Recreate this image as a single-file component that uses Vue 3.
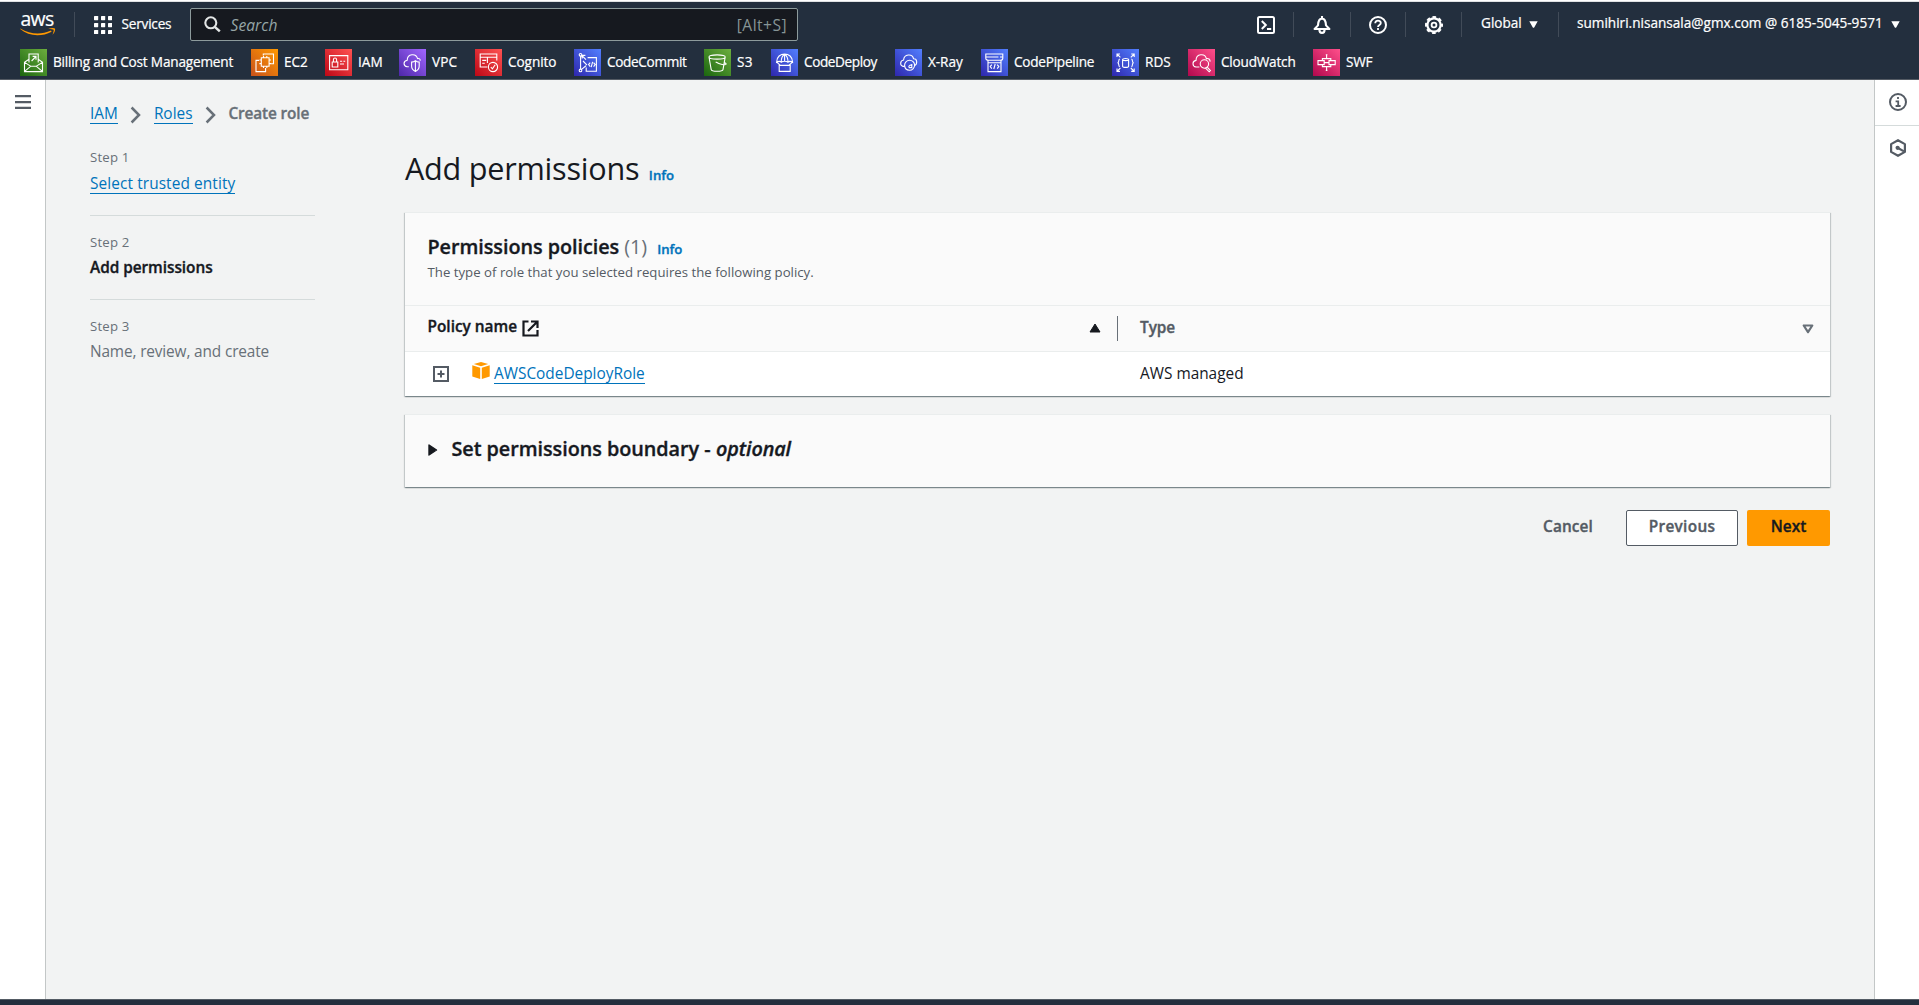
<script setup>
// span: distance to the next favourite; tracking: letter spacing of the label
const favourites = [
  { label: 'Billing and Cost Management', tone: 'green', span: 231, tracking: -0.19, icon: 'M9 13.5V5h9.2v8.5M11.6 12l4.2-4.4M12.6 7.4h3.4v3.4M9 10.2l-4.5 3V22.6h18v-9.4l-4.3-3M4.6 13.4l6.4 4M22.4 13.4l-6.4 4M4.6 22.4l6.2-5.2h5.4l6.2 5.2' },
  { label: 'EC2', tone: 'orange', span: 74, tracking: 0, icon: 'M10.3 8.8h7.8v8.4h-7.8zM12.5 8.6V7M15.8 8.6V7M12.5 19v-1.8M15.8 19v-1.8M18.2 11h1.8M18.2 14.6h1.8M8.4 11h1.8M8.4 14.6h1.8M12.3 6.4V5h10.2v9.8h-3M8 11.4H5v11.2h9.6V19' },
  { label: 'IAM', tone: 'red', span: 74, tracking: 0, icon: 'M4.6 6.6h18.2v14.2H4.6zM7.2 13h5.6v5H7.2zM8.4 13v-2.2a1.6 1.8 0 0 1 3.2 0V13M15 12.2h2.2M18.4 12.2h1.8M15 15h4' },
  { label: 'VPC', tone: 'purple', span: 76, tracking: 0.1, icon: 'M9.8 17.8H8.2c-4.2-.6-4.2-6 0-6.6.2-6.6 8.8-7.4 10.4-1.6 1.6-.6 2.8.6 2.6 2.2M16.4 11.8c-1 .8-2.4 1.3-3.8 1.3v4c0 2.6 1.6 4.4 3.8 5.4 2.2-1 3.8-2.8 3.8-5.4v-4c-1.4 0-2.8-.5-3.8-1.3zM16.4 12v10.4' },
  { label: 'Cognito', tone: 'red', span: 99, tracking: -0.08, icon: 'M12.4 18H5.2V5h16.6v6.6M5.2 8.2h16.6M7.2 11.4h4M7.2 14.2h2.6M12.4 14V8.4M18 22.6a4.6 4.6 0 1 0 0-9.2 4.6 4.6 0 0 0 0 9.2zM15.8 18l1.6 1.8 2.8-4' },
  { label: 'CodeCommit', tone: 'blue', span: 130, tracking: -0.33, icon: 'M6.6 6.8v13.4M7.8 6.4l4.2 4.2M8.2 9.6V6.4h3.2M7.6 20.4l4.4-3.6M9 12l4 4.2M13.6 8.6h8.8v13.6H12.2v-3.6M5.2 5.8a1.3 1.3 0 1 0 2.6 0 1.3 1.3 0 0 0-2.6 0zM5.2 21.4a1.3 1.3 0 1 0 2.6 0 1.3 1.3 0 0 0-2.6 0zM16.2 13.6l-1.6 2 1.6 2M19.6 13.6l1.6 2-1.6 2M18.6 12.8l-1.4 5.4' },
  { label: 'S3', tone: 'green', span: 67, tracking: 0.2, icon: 'M5 8c0-2.8 16.2-2.8 16.2 0S5 10.8 5 8zM5 8l2.2 12.6c.6 2.2 11.2 2.2 11.8 0L21.2 8M12.4 13.2c2.4 1.8 9.6 3.6 9.8 1.8 0-.6-.6-1-1.8-1.6M11.6 13.2h1.4' },
  { label: 'CodeDeploy', tone: 'blue', span: 124, tracking: -0.41, icon: 'M5.6 13.2C5.6 2.2 21.6 2.2 21.6 13.2c-2-1.2-3.4-1.2-4.6 0-1.6-1.2-5-1.2-6.8 0-1.2-1.2-2.6-1.2-4.6 0zM13.6 5v7.4M13.6 5.2c-3 1.8-3.4 4.6-3.4 7.8M13.6 5.2c3 1.8 3.4 4.6 3.4 7.8M6 13.4l3.4 3M21.2 13.4l-3.4 3M8.2 16.4h11v6h-11z' },
  { label: 'X-Ray', tone: 'blue', span: 86, tracking: -0.06, icon: 'M9.2 17.4H8c-3.2-.8-3.2-5.8.6-6.4.4-6 8.6-6.8 10-1.2 3.6-.2 4.4 5.4.6 7M14.4 21.2a5 5 0 1 0-4.8-4.8c.2 2.8 2 4.8 4.8 4.8zM16.8 15v3.6h-2.6a1.5 1.5 0 0 1 2.6-1.8' },
  { label: 'CodePipeline', tone: 'blue', span: 131, tracking: -0.24, icon: 'M4.8 5h17v4.2c0 1.4-1.2 2-2.4 2h-12c-1.4 0-2.6-.6-2.6-2zM4.8 8h12.6M19 8h2.6M7 11.2v11.4h13V11.2M7 13.8h13M10.8 15.6l-1.6 2 1.6 2M16.2 15.6l1.6 2-1.6 2M14.2 15l-1.4 5' },
  { label: 'RDS', tone: 'blue', span: 76, tracking: 0, icon: 'M10.6 10.6v6.6c0 1.6 6 1.6 6 0v-6.6c0-1.4-6-1.4-6 0zM10.6 10.6c0 1.4 6 1.4 6 0M5 8V5h3M5 5l3.4 3.4M22.2 8V5h-3M22.2 5l-3.4 3.4M5 19.4v3h3M5 22.4L8.4 19M22.2 19.4v3h-3M22.2 22.4L18.8 19M7.8 10c-2 .4 0 3.4-2.2 3.8 2.2.4.2 3.4 2.2 3.8M19.4 10c2 .4 0 3.4 2.2 3.8-2.2.4-.2 3.4-2.2 3.8' },
  { label: 'CloudWatch', tone: 'pink', span: 125, tracking: -0.21, icon: 'M11.4 18H8c-4-.6-4-6 0-6.6C8.2 4.4 17 4 18.4 9.6c2.2-.6 3.6.6 3.8 3M16.4 19.2a4.2 4.2 0 1 0 0-8.4 4.2 4.2 0 0 0 0 8.4zM19.2 18.2l3.2 3.4-1.2 1.2-3.4-3.4' },
  { label: 'SWF', tone: 'pink', span: 70, tracking: -0.3, icon: 'M5 11.6h6.2v4H5zM16 11.6h6.2v4H16zM9.4 11.6V9.6h8.4v2M9.4 15.6v2h8.4v-2M13.6 9.6V5.8M13.6 17.6v3.8M11.2 13.6H16M12.8 5.8h1.6M12.8 21.4h1.6' },
]
</script>

<template>
  <div class="console">
    <header class="header">
      <div class="topbar">
        <div class="brand">
          <span class="brand-word">aws</span>
          <svg class="smile" width="36" height="9" viewBox="0 0 36 9">
            <path d="M.4.4C10 6.4 21 7 31 2.6l.6 1.1C21.500 9 9 8.600.2 1.100z" fill="#f90" />
            <path d="M28.2.9c2.800-1 6-1.200 6.700-.3.700.9-.4 4.300-2.400 6.200 1-2.700 1.500-4.500 1.100-5.100-.4-.6-2.600-.7-5.400-.8z" fill="#f90" />
          </svg>
        </div>
        <i class="rule rule-brand"></i>
        <svg class="grid-icon" width="18" height="18" viewBox="0 0 18 18" fill="#fff">
          <template v-for="r in 3" :key="r">
            <rect v-for="c in 3" :key="c" :x="(c - 1) * 7" :y="(r - 1) * 7" width="4.2" height="4.2" rx=".6" />
          </template>
        </svg>
        <span class="services">Services</span>
        <div class="search">
          <svg width="17" height="17" viewBox="0 0 17 17" fill="none" stroke="#e3e6e6" stroke-width="2.1">
            <circle cx="6.8" cy="6.8" r="5.5" />
            <path d="M10.8 10.8l5 4.6" stroke-width="2.5" />
          </svg>
          <em>Search</em>
          <span class="hint">[Alt+S]</span>
        </div>
        <div class="tools">
          <svg class="tool shell" width="18" height="18" viewBox="0 0 18 18" fill="none" stroke="#fff" stroke-width="2">
            <rect x="1" y="1" width="16" height="16" rx="1.5" />
            <path d="M4.8 5l4 4-4 4M10 13h4.2" />
          </svg>
          <i class="rule"></i>
          <svg class="tool bell" width="18" height="18" viewBox="0 0 18 18" fill="none" stroke="#fff" stroke-width="2.1">
            <path d="M9 0v2.5M1.6 13L5 9.4C5.2 5 6.4 2.6 9 2.6s3.8 2.4 4 6.800l3.400 3.600z" stroke-linejoin="round" />
            <path d="M6.4 13.400c0 4.600 5.200 4.600 5.200 0" />
          </svg>
          <i class="rule"></i>
          <svg class="tool" width="18" height="18" viewBox="0 0 18 18" fill="none" stroke="#fff" stroke-width="2">
            <circle cx="9" cy="9" r="8" />
            <path d="M6.200 7.200c0-3.600 5.600-3.400 5.600-.2 0 2-2.800 1.800-2.800 4M9 12v2" stroke-width="1.800" />
          </svg>
          <i class="rule"></i>
          <svg class="tool gear" width="18" height="18" viewBox="0 0 18 18" fill="none" stroke="#fff">
            <circle cx="9" cy="9" r="6.600" stroke-width="2.200" />
            <circle cx="9" cy="9" r="8" stroke-width="2" stroke-dasharray="3.600 2.683" stroke-dashoffset="1.800" />
            <circle cx="9" cy="9" r="2.400" stroke-width="1.800" />
          </svg>
          <i class="rule"></i>
          <span class="region">Global</span>
          <svg class="caret" width="9" height="7" viewBox="0 0 9 7"><path d="M.3.300h8.400L5.200 6.400a.8.8 0 0 1-1.400 0z" fill="#fff" /></svg>
          <i class="rule rule-account"></i>
          <span class="account">sumihiri.nisansala@gmx.com @ 6185-5045-9571</span>
          <svg class="caret" width="9" height="7" viewBox="0 0 9 7"><path d="M.3.300h8.400L5.200 6.400a.8.8 0 0 1-1.400 0z" fill="#fff" /></svg>
        </div>
      </div>
      <nav class="favourites">
        <a v-for="f in favourites" :key="f.label" :style="{ width: f.span + 'px', letterSpacing: f.tracking + 'px' }">
          <svg :class="f.tone" width="27" height="27" viewBox="0 0 27 27"><path :d="f.icon" /></svg>
          <span>{{ f.label }}</span>
        </a>
      </nav>
    </header>

    <div class="body">
      <aside class="rail left">
        <svg width="16" height="14" viewBox="0 0 16 14" fill="#545b64">
          <path d="M0 0h16v2.200H0zM0 6h16v2.200H0zM0 11.800h16V14H0z" />
        </svg>
      </aside>

      <main class="main">
        <nav class="crumbs">
          <a class="link">IAM</a>
          <svg width="12" height="18" viewBox="0 0 12 18"><path d="M1.600 1.500l7.400 7.500-7.400 7.500" /></svg>
          <a class="link">Roles</a>
          <svg width="12" height="18" viewBox="0 0 12 18"><path d="M1.600 1.500l7.400 7.500-7.400 7.500" /></svg>
          <b>Create role</b>
        </nav>

        <div class="columns">
          <ol class="steps">
            <li>
              <small>Step 1</small>
              <a class="link">Select trusted entity</a>
            </li>
            <li>
              <small>Step 2</small>
              <b>Add permissions</b>
            </li>
            <li>
              <small>Step 3</small>
              <span class="pending">Name, review, and create</span>
            </li>
          </ol>

          <section class="content">
            <div class="title">
              <h1>Add permissions</h1>
              <a class="info">Info</a>
            </div>

            <div class="card policies">
              <div class="card-head">
                <div class="heading">
                  <h2>Permissions policies</h2>
                  <span class="count">(1)</span>
                  <a class="info">Info</a>
                </div>
                <p>The type of role that you selected requires the following policy.</p>
              </div>
              <div class="row columns-head">
                <div class="cell name">
                  <b>Policy name</b>
                  <svg class="external" width="17" height="17" viewBox="0 0 17 17" fill="none" stroke="#16191f" stroke-width="2.200">
                    <path d="M6.500 1.500H1.500v14h14V10M9 1.500h6.500V8M15 2L6 11" />
                  </svg>
                  <svg class="sort" width="12" height="10" viewBox="0 0 12 10"><path d="M6 1l5 8H1z" fill="#16191f" stroke="#16191f" stroke-linejoin="round" /></svg>
                </div>
                <div class="cell type">
                  <b>Type</b>
                  <svg width="12" height="10" viewBox="0 0 12 10"><path d="M1.700 1.500h8.600L6 8.200z" fill="none" stroke="#687078" stroke-width="2.200" stroke-linejoin="round" /></svg>
                </div>
              </div>
              <div class="row policy">
                <div class="cell name">
                  <svg class="expand" width="16" height="16" viewBox="0 0 16 16" fill="none" stroke="#545b64" stroke-width="2">
                    <path d="M1 1h14v14H1zM8 4.500v7M4.500 8h7" />
                  </svg>
                  <svg class="box" width="18" height="17" viewBox="0 0 18 17" fill="#f90">
                    <path d="M9 0l7.200 2L9 4.200 1.800 2zM.3 3.300l7.900 2.500V17L.3 14.600zM17.700 3.300L9.800 5.800V17l7.900-2.400z" />
                  </svg>
                  <a class="link">AWSCodeDeployRole</a>
                </div>
                <div class="cell type"><span>AWS managed</span></div>
              </div>
            </div>

            <div class="card boundary">
              <svg width="10" height="12" viewBox="0 0 10 12"><path d="M1 1l7.500 5L1 11z" fill="#16191f" stroke="#16191f" stroke-width="1.400" stroke-linejoin="round" /></svg>
              <h2>Set permissions boundary - <em>optional</em></h2>
            </div>

            <div class="actions">
              <button class="cancel">Cancel</button>
              <button class="previous">Previous</button>
              <button class="next">Next</button>
            </div>
          </section>
        </div>
      </main>

      <aside class="rail right">
        <div class="panel-toggle">
          <svg width="18" height="18" viewBox="0 0 18 18" fill="none" stroke="#545b64" stroke-width="2">
            <circle cx="9" cy="9" r="8" />
            <path d="M9 4v2.100M6.600 8.300H9.200V12.600M6.600 13h5" stroke-width="1.800" />
          </svg>
        </div>
        <div class="panel-toggle last">
          <svg width="18" height="18" viewBox="0 0 18 18" fill="none" stroke="#545b64" stroke-width="2.200">
            <path d="M9 1.200l6.900 3.900v7.800L9 16.800l-6.900-3.900V5.100z" stroke-linejoin="round" />
            <circle cx="8.600" cy="8.800" r="2.100" fill="#545b64" stroke="none" />
            <path d="M9 9l6 3.400" />
          </svg>
        </div>
      </aside>
    </div>
    <footer class="footer"></footer>
  </div>
</template>

<style>
body {
  background: #f2f3f3;
  overflow: hidden;
}
</style>

<style scoped>
.console {
  box-sizing: border-box;
  height: 1005px;
  display: flex;
  flex-direction: column;
  font-family: "Open Sans", "Noto Sans", sans-serif;
  font-size: 15.4px;
  line-height: 22px;
  color: #16191f;
  border-top: 1px solid #fff;
}
svg {
  display: block;
  flex: none;
}
.header {
  box-sizing: border-box;
  height: 79px;
  border-top: 1px solid #dfe1e3;
  border-bottom: 1px solid #545b64;
  background: #232f3e;
  color: #fff;
  font-size: 13.6px;
  white-space: nowrap;
  -webkit-text-stroke: 0.22px #fff;
}
.topbar {
  height: 47px;
  display: flex;
  align-items: flex-start;
  padding-left: 20px;
}
.brand {
  width: 36px;
  height: 34px;
  margin-top: 4px;
}
.brand-word {
  display: block;
  height: 22px;
  margin-left: 0.5px;
  font-size: 19.4px;
  line-height: 25px;
  letter-spacing: -0.7px;
}
.rule {
  width: 1px;
  height: 25px;
  margin-top: 10px;
  background: #414b58;
}
.rule-brand {
  margin-left: 18px;
}
.grid-icon {
  margin: 14px 0 0 19px;
}
.services {
  margin: 11px 0 0 9.5px;
  width: 68.5px;
  letter-spacing: -0.2px;
}
.search {
  box-sizing: border-box;
  width: 608px;
  height: 33px;
  margin-top: 6px;
  display: flex;
  align-items: center;
  border: 1px solid #8d9b9c;
  border-radius: 2px;
  background: #16191f;
  padding: 0 10px 0 13px;
  -webkit-text-stroke: 0;
}
.search em {
  margin-left: 9.5px;
  font-size: 15.6px;
  letter-spacing: 0.05px;
  color: #95a5a6;
}
.search .hint {
  margin-left: auto;
  padding-top: 1px;
  font-size: 15.6px;
  letter-spacing: 0.45px;
  color: #879596;
}
.tools {
  display: flex;
  align-items: flex-start;
  margin-left: 459px;
}
.tool {
  margin: 14px 18px 0;
}
.shell {
  margin-left: 0;
}
.bell {
  margin-right: 19.5px;
  margin-left: 18.5px;
}
.gear {
  margin-left: 18.5px;
  margin-right: 18.5px;
}
.region {
  margin: 10px 7px 0 19px;
  width: 41px;
}
.caret {
  margin-top: 19px;
}
.rule-account {
  margin-left: 20px;
}
.account {
  margin: 10px 9px 0 18px;
  width: 305px;
}
.favourites {
  display: flex;
  padding-left: 20px;
}
.favourites a {
  display: flex;
  align-items: center;
  gap: 6px;
  flex: none;
}
.favourites svg {
  fill: none;
  stroke: #fff;
  stroke-width: 1.1;
}
.favourites span {
  line-height: 26px;
  height: 27px;
}
.green { background: linear-gradient(45deg, #1b660f, #6cae3e); }
.orange { background: linear-gradient(45deg, #c8511b, #f90); }
.red { background: linear-gradient(45deg, #bd0816, #ff5252); }
.purple { background: linear-gradient(45deg, #4d27a8, #a166ff); }
.blue { background: linear-gradient(45deg, #2e27ad, #527fff); }
.pink { background: linear-gradient(45deg, #b0084d, #ff4f8b); }

.body {
  flex: 1;
  display: flex;
  min-height: 0;
}
.rail {
  box-sizing: border-box;
  background: #fff;
}
.left {
  width: 46px;
  padding: 15px 0 0 15px;
  border-right: 1px solid #c3c7c7;
}
.right {
  width: 45px;
  border-left: 1px solid #c3c7c7;
}
.panel-toggle {
  box-sizing: border-box;
  height: 46px;
  padding-bottom: 2px;
  border-bottom: 1px solid #d5dbdb;
  display: flex;
  align-items: center;
  justify-content: center;
}
.panel-toggle svg {
  margin-left: 2px;
}
.panel-toggle.last {
  height: 45px;
  border: 0;
}
.main {
  flex: 1;
  box-sizing: border-box;
  padding: 22px 44px 0 44px;
}
.link {
  display: inline-block;
  box-sizing: border-box;
  height: 22px;
  line-height: 23.6px;
  border-bottom: 1px solid #0073bb;
  color: #0073bb;
}
b,
h2,
.info,
button {
  font-weight: 600;
  -webkit-text-stroke: 0.35px currentColor;
}
.crumbs {
  display: flex;
  align-items: center;
  height: 22px;
}
.crumbs svg {
  margin: 3px 12px 0;
  fill: none;
  stroke: #687078;
  stroke-width: 2.5;
}
.crumbs b {
  height: 22px;
  line-height: 23.6px;
  letter-spacing: -0.15px;
  color: #687078;
}
.columns {
  display: flex;
  justify-content: space-between;
}
.steps {
  width: 225px;
  margin: 23px 0 0;
  padding: 0;
  list-style: none;
}
.steps li {
  padding-bottom: 21px;
  border-bottom: 1px solid #d5dbdb;
}
.steps li + li {
  padding-top: 16px;
}
.steps li:last-child {
  border: 0;
}
.steps small {
  display: block;
  font-size: 13.2px;
  line-height: 20px;
  letter-spacing: 0.2px;
  margin-bottom: 4px;
  color: #687078;
}
.steps .link {
  display: block;
  width: 145px;
  margin-top: 5px;
  letter-spacing: 0.1px;
  white-space: nowrap;
}
.steps b {
  display: block;
  height: 22px;
  line-height: 24px;
  letter-spacing: -0.05px;
}
.pending {
  display: block;
  height: 22px;
  line-height: 24px;
  letter-spacing: -0.14px;
  color: #687078;
}
.content {
  width: 1427px;
  margin-right: -1px;
}
.title {
  display: flex;
  align-items: baseline;
  gap: 9.5px;
  height: 64px;
  padding-top: 24px;
}
h1,
h2,
p {
  margin: 0;
}
h1 {
  margin-left: 1px;
  font-size: 30.6px;
  font-weight: 400;
  line-height: 40px;
  letter-spacing: -0.23px;
}
.info {
  font-size: 13.2px;
  color: #0073bb;
}
.card {
  box-sizing: border-box;
  margin: 0 1px;
  border-top: 1px solid #eaeded;
  background: #fafafa;
  box-shadow: 0 1px 1px 0 rgba(0, 28, 36, 0.3), 1px 1px 1px 0 rgba(0, 28, 36, 0.15), -1px 1px 1px 0 rgba(0, 28, 36, 0.15);
}
.policies {
  height: 184px;
}
.card-head {
  height: 72px;
  padding: 20px 22.5px 0;
}
.heading {
  display: flex;
  align-items: baseline;
  height: 29px;
}
h2 {
  font-size: 19.8px;
  line-height: 28px;
  letter-spacing: -0.04px;
}
.count {
  margin: 0 10px 0 5px;
  font-size: 19.8px;
  color: #687078;
}
.card-head p {
  font-size: 13.2px;
  line-height: 20px;
  letter-spacing: 0.02px;
  color: #545b64;
}
.row {
  display: flex;
  border-top: 1px solid #eaeded;
}
.cell {
  display: flex;
  box-sizing: border-box;
}
.cell.name {
  width: 712px;
}
.cell.type {
  flex: 1;
  padding-left: 23px;
}
.columns-head {
  height: 45px;
}
.columns-head .name {
  padding: 10px 16px 0 22.5px;
}
.external {
  margin: 4px 0 0 5px;
}
.sort {
  margin: 7px 0 0 auto;
}
.columns-head .type {
  height: 25px;
  margin-top: 10px;
  padding: 1px 16px 0 22px;
  border-left: 1px solid #687078;
  justify-content: space-between;
  align-items: flex-start;
  color: #545b64;
}
.columns-head .type b {
  letter-spacing: -0.05px;
}
.columns-head .type svg {
  margin-top: 7px;
}
.policy {
  height: 44px;
  background: #fff;
}
.policy .name {
  padding: 10px 0 0 28px;
}
.expand {
  margin-top: 4px;
}
.box {
  margin: 0 4.5px 0 22.5px;
}
.policy .type {
  padding-top: 11px;
}
.boundary {
  display: flex;
  height: 73px;
  margin-top: 18px;
  padding: 20px 23px;
}
.boundary svg {
  margin: 9px 13.5px 0 0;
}
.boundary em {
  margin-left: 0.5px;
  letter-spacing: -0.1px;
}
.actions {
  display: flex;
  justify-content: flex-end;
  gap: 9px;
  margin: 23px 1px 0 0;
}
button {
  box-sizing: border-box;
  height: 36px;
  padding: 0 0 2px;
  border: 1px solid transparent;
  border-radius: 2px;
  font: 600 15.4px/22px "Open Sans", sans-serif;
  color: #545b64;
}
.cancel {
  width: 94px;
  margin-right: 2px;
  background: none;
  letter-spacing: 0.1px;
}
.previous {
  width: 112px;
  background: #fff;
  border-color: #545b64;
  letter-spacing: 0.3px;
}
.next {
  width: 83px;
  background: #f90;
  color: #16191f;
}
.footer {
  box-sizing: border-box;
  height: 6px;
  border-top: 1px solid #545b64;
  background: #232f3e;
}
</style>
